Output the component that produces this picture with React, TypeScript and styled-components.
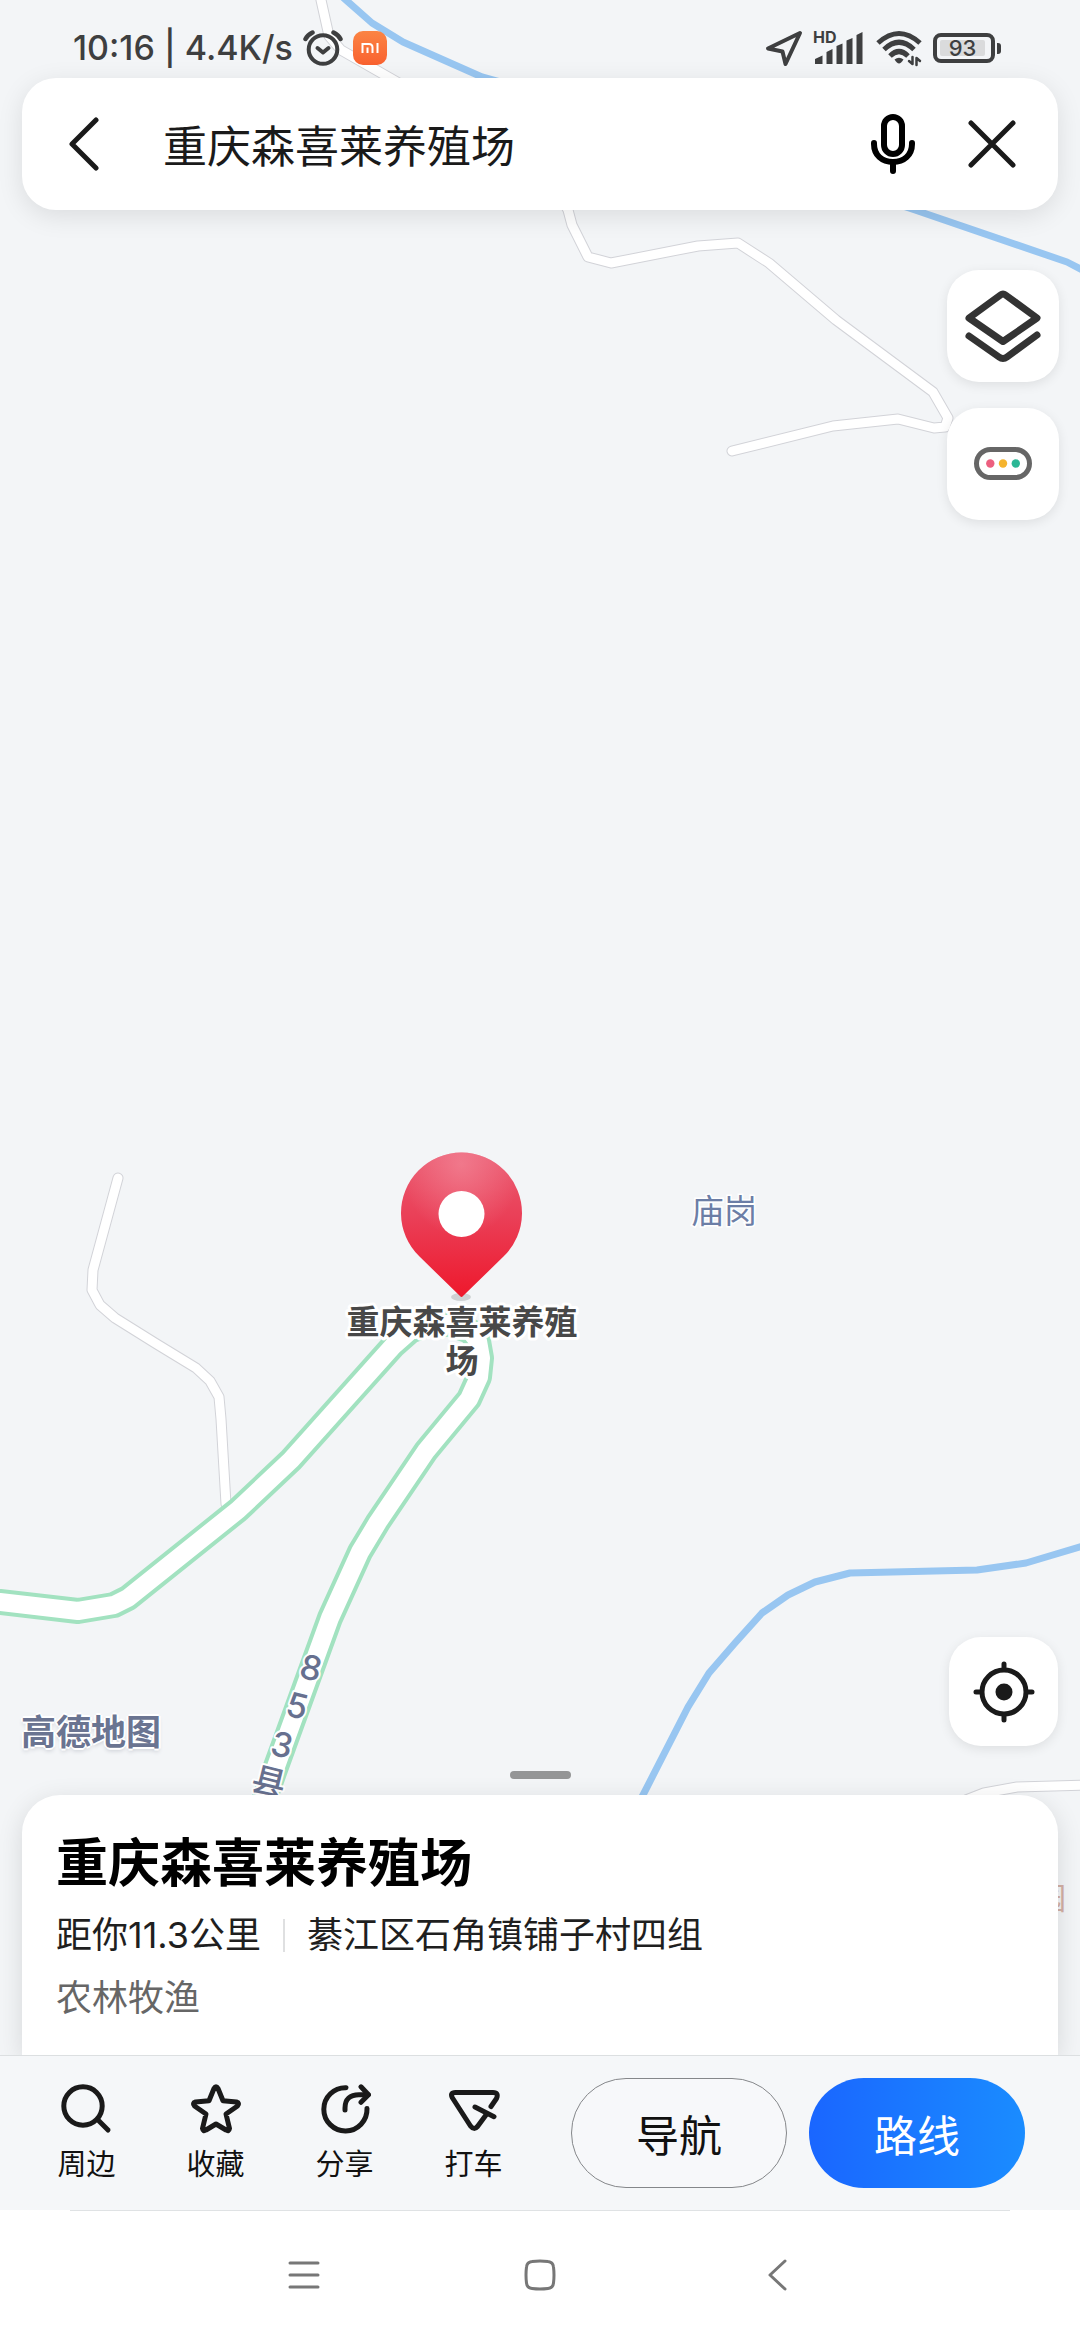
import React from "react";
import styled, { createGlobalStyle } from "styled-components";

const fontStack = `Inter, "Noto Sans CJK SC", "Noto Sans", sans-serif`;

const GlobalStyle = createGlobalStyle`
  *, *::before, *::after { box-sizing: border-box; }
  body {
    margin: 0;
    background: #fff;
    font-family: ${fontStack};
    color: #1a1a1a;
  }
  button, input { font: inherit; color: inherit; }
  svg { display: block; flex: none; }
  h1, p { margin: 0; }
`;

const Screen = styled.div`
  position: relative;
  min-height: 100vh;
  display: flex;
  flex-direction: column;
  overflow: hidden;
  background: #f3f5f7;
`;

const MapCanvas = styled.svg`
  position: absolute;
  inset: 0;
  width: 100%;
  height: 100%;
  font-family: ${fontStack};
`;

const Layer = styled.div`
  position: relative;
  flex: 1;
  display: flex;
  flex-direction: column;
`;

const PlainButton = styled.button`
  display: flex;
  align-items: center;
  justify-content: center;
  padding: 0;
  border: 0;
  background: none;
  cursor: pointer;
`;

/* Status bar */

const StatusBar = styled.header`
  display: flex;
  align-items: center;
  justify-content: space-between;
  height: 78px;
  padding: 18px 79px 0 73px;
  color: #3e3f40;
`;

const StatusGroup = styled.div`
  display: flex;
  align-items: center;
  gap: 10px;
`;

const StatusText = styled.span`
  font-size: 34px;
  font-weight: 500;
  line-height: 40px;
`;

const Battery = styled.span`
  display: flex;
  align-items: center;
  gap: 2px;

  &::after {
    content: "";
    width: 4px;
    height: 11px;
    border-radius: 0 3px 3px 0;
    background: #3e3f40;
  }
`;

const BatteryCase = styled.span`
  width: 62px;
  height: 30px;
  padding: 3px;
  border: 4px solid #3e3f40;
  border-radius: 8px;
`;

const BatteryLevel = styled.span`
  display: block;
  width: 45px;
  height: 16px;
  border-radius: 2px;
  background: #dadbdc;
  font-size: 22px;
  font-weight: 500;
  line-height: 16px;
  text-align: center;
`;

/* Search */

const SearchBar = styled.form`
  display: flex;
  align-items: center;
  height: 132px;
  margin: 0 22px;
  padding: 0 42px 0 47px;
  border-radius: 34px;
  background: #fff;
  box-shadow: 0 6px 26px rgba(0, 0, 0, 0.1);
`;

const SearchInput = styled.input`
  flex: 1;
  min-width: 0;
  height: 66px;
  margin-left: 64px;
  padding: 0;
  border: 0;
  outline: 0;
  background: none;
  font-size: 44px;
  color: #1a1a1a;
`;

const SearchActions = styled.div`
  display: flex;
  align-items: center;
  gap: 53px;
`;

/* Floating map controls */

const MapTools = styled.nav`
  display: flex;
  flex-direction: column;
  align-items: flex-end;
  gap: 26px;
  padding: 60px 21px 0;
`;

const ToolButton = styled(PlainButton)<{ $size: number }>`
  width: ${(p) => p.$size}px;
  height: ${(p) => p.$size}px;
  border-radius: 32px;
  background: #fff;
  box-shadow: 0 3px 12px rgba(0, 0, 0, 0.09);
`;

const MapFooter = styled.div`
  display: flex;
  align-items: flex-end;
  justify-content: space-between;
  margin-top: auto;
  padding: 0 22px 25px 21px;
`;

const Watermark = styled.span`
  font-size: 35px;
  font-weight: 700;
  line-height: 28px;
  color: #6a7491;
  text-shadow: 2px 0 #fff, -2px 0 #fff, 0 2px #fff, 0 -2px #fff, 0 3px 4px #c8cbd2;
`;

const DragHandle = styled(PlainButton)`
  align-self: center;
  width: 61px;
  height: 8px;
  margin-bottom: 16px;
  border-radius: 4px;
  background: #949596;
`;

/* Place sheet */

const Sheet = styled.main`
  display: flex;
  flex-direction: column;
  gap: 19px;
  margin: 0 22px;
  padding: 39px 34px 35px;
  border-radius: 38px 38px 0 0;
  background: #fff;
  box-shadow: 0 6px 26px rgba(0, 0, 0, 0.12);
`;

const PlaceName = styled.h1`
  font-size: 52px;
  font-weight: 700;
  line-height: 60px;
  color: #000;
`;

const PlaceLine = styled.p<{ $muted?: boolean }>`
  display: flex;
  align-items: center;
  font-size: 36px;
  line-height: 44px;
  color: ${(p) => (p.$muted ? "#666" : "#1f1f1f")};
`;

const Divider = styled.span`
  width: 2px;
  height: 33px;
  margin: 0 22px;
  background: #dfe0e1;
`;

/* Bottom toolbar */

const Toolbar = styled.footer`
  position: relative;
  display: flex;
  align-items: center;
  gap: 33px;
  height: 155px;
  padding: 0 55px 0 22px;
  border-top: 1px solid #dcdfe1;
  background: #f5f7f9;
`;

const Actions = styled.div`
  flex: 1;
  display: grid;
  grid-template-columns: repeat(4, 1fr);
`;

const Action = styled(PlainButton)`
  flex-direction: column;
  gap: 14px;
  padding-bottom: 2px;
  font-size: 29px;
  line-height: 34px;
  color: #111;
`;

const Pills = styled.div`
  display: flex;
  gap: 22px;
`;

const Pill = styled(PlainButton)<{ $primary?: boolean }>`
  width: 216px;
  height: 110px;
  border: ${(p) => (p.$primary ? "0" : "1px solid #85878a")};
  border-radius: 55px;
  background: ${(p) => (p.$primary ? "linear-gradient(90deg, #1a66ff, #1a8cff)" : "#f7f8fa")};
  color: ${(p) => (p.$primary ? "#fff" : "#111")};
  font-size: 43px;
  font-weight: 400;
`;

const SystemNav = styled.nav`
  position: relative;
  display: flex;
  align-items: center;
  justify-content: center;
  gap: 204px;
  height: 130px;
  background: #fff;

  &::before {
    content: "";
    position: absolute;
    top: 0;
    left: 70px;
    right: 70px;
    height: 1px;
    background: #dfe2e4;
  }
`;

type LineIconProps = {
  w: number;
  h: number;
  stroke?: number;
  color?: string;
  children: React.ReactNode;
};

const LineIcon = ({ w, h, stroke = 5, color = "#1a1a1a", children }: LineIconProps) => (
  <svg
    width={w}
    height={h}
    viewBox={`0 0 ${w} ${h}`}
    fill="none"
    stroke={color}
    strokeWidth={stroke}
    strokeLinecap="round"
    strokeLinejoin="round"
    aria-hidden="true"
  >
    {children}
  </svg>
);

const lanes = [
  "M320 -6 L321 0 L329 36 L341 50 L390 78 L470 124 L540 160 L568 210 L572 225 L588 257 L611 263 L698 246 L738 243 L769 263 L836 320 L933 392 L948 418 L945 427 L934 428 L898 419 L833 426 L732 451",
  "M118 1178 L93 1270 L92 1290 L100 1305 L115 1318 L155 1343 L196 1368 L210 1381 L219 1397 L221 1419 L226 1504",
  "M966 1800 L984 1793 L1017 1787 L1090 1785",
];
const rivers = [
  "M338 -7 L346 0 L372 23 L403 42 L482 77 L640 120 L915 210 L1067 262 L1090 274",
  "M634 1812 L643 1795 L688 1707 L709 1673 L735 1643 L762 1613 L788 1595 L815 1582 L850 1573 L977 1570 L1026 1563 L1090 1544",
];
const countyRoad =
  "M-10 1601 L0 1602 L78 1611 L114 1605 L128 1598 L238 1510 L291 1460 L393 1346 L410 1331 L428 1324 L450 1324 L470 1331 L478 1341 L481 1358 L479 1377 L469 1399 L426 1451 L378 1522 L360 1552 L330 1618 L274 1772 L260 1812";

const roadLabel = [
  { ch: "8", x: 311, y: 1668 },
  { ch: "5", x: 297, y: 1706 },
  { ch: "3", x: 282, y: 1745 },
  { ch: "县", x: 269, y: 1782 },
];

const MapView = () => (
  <MapCanvas viewBox="0 0 1080 2340" preserveAspectRatio="xMidYMid slice">
    <defs>
      <linearGradient id="pinFill" x1="0" y1="0" x2="0" y2="1">
        <stop offset="0" stopColor="#ea5a70" />
        <stop offset="0.45" stopColor="#ea3f57" />
        <stop offset="1" stopColor="#ee182c" />
      </linearGradient>
      <radialGradient id="pinShine" cx="0.5" cy="0.08" r="0.5">
        <stop offset="0" stopColor="#f58fa0" stopOpacity="0.6" />
        <stop offset="1" stopColor="#f58fa0" stopOpacity="0" />
      </radialGradient>
    </defs>
    <g fill="none" strokeLinejoin="round" strokeLinecap="round">
      {lanes.map((d) => (
        <path key={d} d={d} stroke="#d2d3d8" strokeWidth="11" />
      ))}
      {lanes.map((d) => (
        <path key={d} d={d} stroke="#fff" strokeWidth="9" />
      ))}
      {rivers.map((d) => (
        <path key={d} d={d} stroke="#98c6f1" strokeWidth="7" />
      ))}
      <path d={countyRoad} stroke="#a2e2c0" strokeWidth="26" />
      <path d={countyRoad} stroke="#fff" strokeWidth="18" />
    </g>

    <g
      fill="#67708f"
      stroke="#fff"
      strokeWidth="4"
      paintOrder="stroke"
      strokeLinejoin="round"
      fontSize="34"
      fontWeight="500"
      textAnchor="middle"
    >
      {roadLabel.map(({ ch, x, y }) => (
        <text key={ch} transform={`translate(${x} ${y}) rotate(14)`} y="12">
          {ch}
        </text>
      ))}
    </g>
    <text x="691" y="1223" fontSize="33" fill="#6c7ea6" stroke="#fff" strokeWidth="3" paintOrder="stroke">
      庙岗
    </text>
    <text x="1066" y="1909" fontSize="30" textAnchor="end" fill="#d3b0a6">
      园
    </text>

    <g
      fontSize="33"
      fontWeight="700"
      fill="#484848"
      stroke="#fff"
      strokeWidth="6"
      strokeLinejoin="round"
      paintOrder="stroke"
      textAnchor="middle"
    >
      <text x="462" y="1334">重庆森喜莱养殖</text>
      <text x="462" y="1373">场</text>
    </g>
    <ellipse cx="461" cy="1297" rx="10" ry="4" fill="#cfd2d4" />
    <g>
      {["url(#pinFill)", "url(#pinShine)"].map((fill) => (
        <path
          key={fill}
          d="M463 1296 Q461.500 1298 460 1296 L419.500 1256.600 A60.500 60.500 0 1 1 503.500 1256.600 Z"
          fill={fill}
        />
      ))}
      <circle cx="461.500" cy="1214" r="23" fill="#fff" />
    </g>
  </MapCanvas>
);

const actions = [
  {
    label: "周边",
    icon: (
      <>
        <circle cx="22" cy="24" r="19.200" />
        <path d="M38 39 L47 48" />
      </>
    ),
  },
  {
    label: "收藏",
    icon: (
      <path d="M24 6.500 Q26 3 28 6.500 L33 18.700 L46.500 20 Q50 21 47.500 24 L36 32 L39.500 46.500 Q39 50 36 48 L26 42 L16 48 Q13 50 12.500 46.500 L16 32 L4.500 24 Q2 21 5.500 20 L19 18.700 Z" />
    ),
  },
  {
    label: "分享",
    icon: (
      <>
        <path d="M27 5.700 A21.600 21.600 0 1 0 48 26.500" />
        <path d="M26 28 V26 C26 17 31 12.700 40 12.700 H49" />
        <path d="M42 4.800 L49.500 12.700 L42 20.300" />
      </>
    ),
  },
  {
    label: "打车",
    icon: (
      <>
        <path d="M43 24.500 L48.500 16.500 Q51 10.500 45 10.500 H7.500 Q1.500 10.500 4.500 16 L22.500 44 Q26 48.500 29.500 44.500 L38.700 32" />
        <path d="M27 25 L46 34.700" />
      </>
    ),
  },
];

export default function App() {
  return (
    <Screen>
      <GlobalStyle />
      <MapView />
      <Layer>
        <StatusBar>
          <StatusGroup>
            <StatusText>10:16 | 4.4K/s</StatusText>
            <LineIcon w={40} h={38} stroke={4} color="#3e3f40">
              <circle cx="20" cy="20.500" r="14.300" />
              <path d="M2.500 10 Q4.500 6 9.500 3.500 M37.500 10 Q35.500 6 30.500 3.500" strokeWidth="4.500" />
              <path d="M14.500 19 L20 23.500 L25.500 19" />
            </LineIcon>
            <svg width="34" height="34" viewBox="0 0 34 34" aria-hidden="true">
              <defs>
                <linearGradient id="miFill" x1="0" y1="0" x2="0" y2="1">
                  <stop offset="0" stopColor="#fb8444" />
                  <stop offset="1" stopColor="#f9612f" />
                </linearGradient>
              </defs>
              <rect width="34" height="34" rx="10" fill="url(#miFill)" />
              <path d="M9.500 22 V13 H16 Q19.500 13 19.500 16.500 V22 M14.500 16.500 V22 M24.500 12 V22" fill="none" stroke="#fff" strokeWidth="2" />
            </svg>
          </StatusGroup>
          <StatusGroup>
            <LineIcon w={38} h={38} stroke={4} color="#3e3f40">
              <path d="M35 4 L3 19.500 L17.500 22.500 L20.500 35 Z" />
            </LineIcon>
            <svg width="52" height="48" viewBox="0 -6 52 48" fill="#3e3f40" aria-hidden="true">
              <text x="0" y="13" fontSize="16" fontWeight="700">HD</text>
              <path d="M2 34 V29 L9.500 25.500 V34 Z M13.500 34 V22 L19.500 19 V34 Z M23.500 34 V16 L29.500 13.500 V34 Z M33.500 34 V10.500 L39.500 8 V34 Z M43.500 34 V5 L49.500 2 V34 Z" />
            </svg>
            <LineIcon w={48} h={38} stroke={4} color="#3e3f40">
              <g strokeLinecap="butt" strokeWidth="5">
                <path d="M3 14 Q24 -5 45 14" />
                <path d="M9 20.500 Q24 6 39 20.500" />
                <path d="M15 27 Q24 18 33 27" />
              </g>
              <path d="M19.500 30.500 Q24 27 28.500 30.500 Q26 34.500 24 34.500 Q22 34.500 19.500 30.500 Z" fill="#3e3f40" stroke="none" />
              <path d="M37.500 28 V35 L34 32 M41.500 36 V29 L45 32" strokeWidth="2.500" />
            </LineIcon>
            <Battery>
              <BatteryCase>
                <BatteryLevel>93</BatteryLevel>
              </BatteryCase>
            </Battery>
          </StatusGroup>
        </StatusBar>

        <SearchBar role="search" onSubmit={(e) => e.preventDefault()}>
          <PlainButton type="button" aria-label="返回">
            <LineIcon w={30} h={54} stroke={5}>
              <path d="M27 3 L3 27 L27 51" />
            </LineIcon>
          </PlainButton>
          <SearchInput type="text" aria-label="搜索地点" defaultValue="重庆森喜莱养殖场" />
          <SearchActions>
            <PlainButton type="button" aria-label="语音搜索">
              <LineIcon w={44} h={60} color="#000" stroke={6}>
                <rect x="13" y="3" width="18" height="37" rx="9" />
                <path d="M3 29 V30 C3 41 11 48 22 48 C33 48 41 41 41 30 V29 M22 49 V57" />
              </LineIcon>
            </PlainButton>
            <PlainButton type="button" aria-label="清除">
              <LineIcon w={48} h={48} stroke={5}>
                <path d="M3 3 L45 45 M45 3 L3 45" />
              </LineIcon>
            </PlainButton>
          </SearchActions>
        </SearchBar>

        <MapTools aria-label="地图工具">
          <ToolButton $size={112} aria-label="图层">
            <LineIcon w={78} h={76} stroke={7} color="#333">
              <path d="M36.500 7 Q39 5 41.500 7 L73 30 L39 53.500 L5 30 Z" />
              <path d="M5 48 L35 69 Q39 72 43 69 L73 47" />
            </LineIcon>
          </ToolButton>
          <ToolButton $size={112} aria-label="路况">
            <svg width="58" height="34" viewBox="0 0 58 34" aria-hidden="true">
              <rect x="2.500" y="2.500" width="53" height="28" rx="14" fill="none" stroke="#666" strokeWidth="5" />
              <circle cx="16.300" cy="16.500" r="4.200" fill="#ec5f7f" />
              <circle cx="29" cy="16.500" r="4.200" fill="#f5b42e" />
              <circle cx="41.800" cy="16.500" r="4.200" fill="#2ab795" />
            </svg>
          </ToolButton>
        </MapTools>

        <MapFooter>
          <Watermark>高德地图</Watermark>
          <ToolButton $size={109} aria-label="定位">
            <LineIcon w={62} h={62} stroke={5}>
              <circle cx="31" cy="31" r="22" />
              <circle cx="31" cy="31" r="8.500" fill="#1a1a1a" stroke="none" />
              <path d="M31 3 V8 M31 54 V59 M3 31 H8 M54 31 H59" />
            </LineIcon>
          </ToolButton>
        </MapFooter>
        <DragHandle aria-label="展开详情" />

        <Sheet>
          <PlaceName>重庆森喜莱养殖场</PlaceName>
          <PlaceLine>
            <span>距你11.3公里</span>
            <Divider />
            <span>綦江区石角镇铺子村四组</span>
          </PlaceLine>
          <PlaceLine $muted>农林牧渔</PlaceLine>
        </Sheet>

        <Toolbar>
          <Actions>
            {actions.map(({ label, icon }) => (
              <Action key={label}>
                <LineIcon w={52} h={52} stroke={5}>
                  {icon}
                </LineIcon>
                {label}
              </Action>
            ))}
          </Actions>
          <Pills>
            <Pill>导航</Pill>
            <Pill $primary>路线</Pill>
          </Pills>
        </Toolbar>

        <SystemNav aria-label="系统导航">
          <PlainButton aria-label="最近任务">
            <LineIcon w={32} h={32} stroke={3} color="#777">
              <path d="M2 4 H30 M2 16 H30 M2 28 H30" />
            </LineIcon>
          </PlainButton>
          <PlainButton aria-label="主屏幕">
            <LineIcon w={32} h={32} stroke={3} color="#777">
              <path d="M8 2.500 Q16 1.500 24 2.500 Q29 3 29.500 8 Q30.500 16 29.500 24 Q29 29 24 29.500 Q16 30.500 8 29.500 Q3 29 2.500 24 Q1.500 16 2.500 8 Q3 3 8 2.500 Z" />
            </LineIcon>
          </PlainButton>
          <PlainButton aria-label="后退">
            <LineIcon w={32} h={32} stroke={3} color="#777">
              <path d="M25 2 L10 16 L25 30" />
            </LineIcon>
          </PlainButton>
        </SystemNav>
      </Layer>
    </Screen>
  );
}
